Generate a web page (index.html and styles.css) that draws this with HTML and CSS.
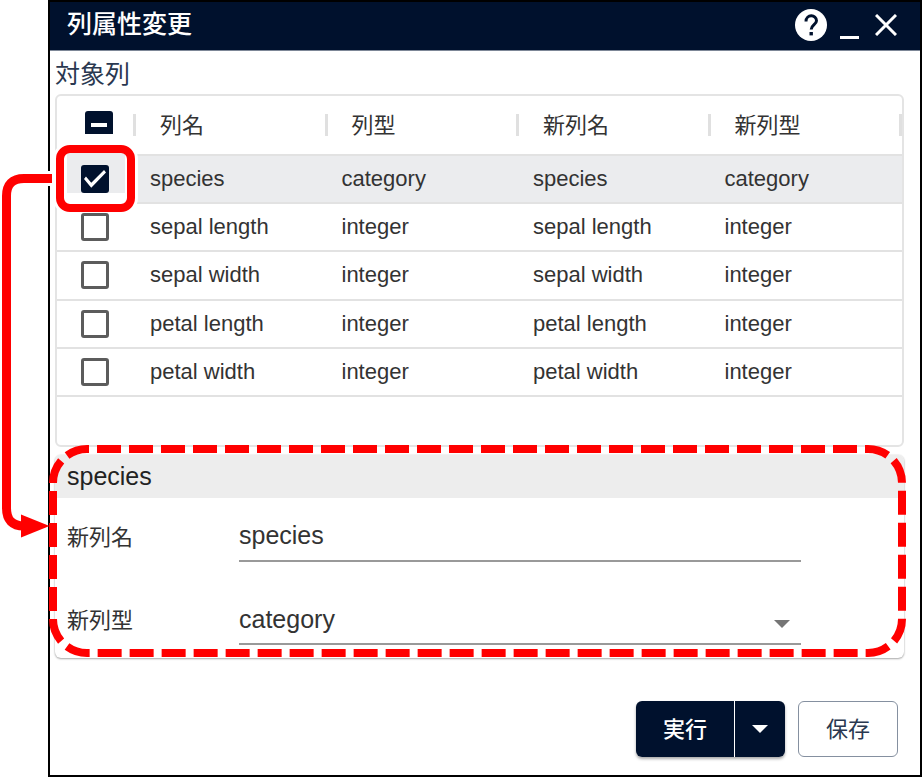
FILE: index.html
```
<!DOCTYPE html>
<html lang="ja">
<head>
    <meta charset="UTF-8">
    <meta name="viewport" content="width=device-width, initial-scale=1.0">
    <title>列属性変更</title>
    <link rel="stylesheet" href="styles.css">
</head>
<body>

    <main class="page">
        <section class="dialog">
            <!-- Title bar -->
            <header class="titlebar">
                <h1>列属性変更</h1>
                <button type="button" class="icon-button" aria-label="ヘルプ">
                    <svg width="32" height="32" viewBox="0 0 32 32">
                        <circle cx="16" cy="16" r="16" fill="#fff"/>
                        <path d="M11 12.500C11 5 21.500 5.200 21.500 11.800C21.500 15.500 16.200 16 16.200 20.500" fill="none" stroke="#00112d" stroke-width="3"/>
                        <rect x="14.500" y="23" width="3.400" height="3.400" fill="#00112d"/>
                    </svg>
                </button>
                <button type="button" class="icon-button" aria-label="最小化">
                    <svg width="20" height="32" viewBox="0 0 20 32"><path d="M1 28.500H20" stroke="#fff" stroke-width="3"/></svg>
                </button>
                <button type="button" class="icon-button close" aria-label="閉じる">
                    <svg width="22" height="22" viewBox="0 0 22 22"><path d="M1 1L21 21M21 1L1 21" stroke="#fff" stroke-width="3"/></svg>
                </button>
            </header>

            <div class="body">
                <h2>対象列</h2>

                <!-- Column list -->
                <div class="grid">
                    <table>
                        <thead>
                            <tr>
                                <th class="check"><div class="head"><input type="checkbox" class="mixed" aria-label="すべて選択"></div></th>
                                <th><div class="head"><span>列名</span></div></th>
                                <th><div class="head"><span>列型</span></div></th>
                                <th><div class="head"><span>新列名</span></div></th>
                                <th><div class="head"><span>新列型</span></div></th>
                            </tr>
                        </thead>
                        <tbody>
                            <tr class="selected">
                                <td class="check"><span class="callout"></span><input type="checkbox" checked aria-label="species"></td>
                                <td>species</td><td>category</td><td>species</td><td>category</td>
                            </tr>
                            <tr>
                                <td class="check"><input type="checkbox" aria-label="sepal length"></td>
                                <td>sepal length</td><td>integer</td><td>sepal length</td><td>integer</td>
                            </tr>
                            <tr>
                                <td class="check"><input type="checkbox" aria-label="sepal width"></td>
                                <td>sepal width</td><td>integer</td><td>sepal width</td><td>integer</td>
                            </tr>
                            <tr>
                                <td class="check"><input type="checkbox" aria-label="petal length"></td>
                                <td>petal length</td><td>integer</td><td>petal length</td><td>integer</td>
                            </tr>
                            <tr>
                                <td class="check"><input type="checkbox" aria-label="petal width"></td>
                                <td>petal width</td><td>integer</td><td>petal width</td><td>integer</td>
                            </tr>
                        </tbody>
                    </table>
                </div>

                <!-- Settings of the selected column -->
                <form class="panel">
                    <h3>species</h3>
                    <div class="field">
                        <label for="new-name">新列名</label>
                        <input type="text" id="new-name" value="species">
                    </div>
                    <div class="field">
                        <label for="new-type">新列型</label>
                        <div class="select">
                            <select id="new-type">
                                <option>category</option>
                                <option>integer</option>
                            </select>
                            <svg width="16" height="8" viewBox="0 0 16 8"><path d="M0 0H16L8 8Z" fill="#757575"/></svg>
                        </div>
                    </div>
                    <svg class="dashes"><rect width="100%" height="100%" rx="34"/></svg>
                </form>
            </div>

            <footer>
                <div class="split">
                    <button type="button" class="run">実行</button>
                    <button type="button" class="more" aria-label="その他">
                        <svg width="16" height="8" viewBox="0 0 16 8"><path d="M0 0H16L8 8Z" fill="#fff"/></svg>
                    </button>
                </div>
                <button type="button" class="save">保存</button>
            </footer>
        </section>

        <!-- Arrow from the checkbox to the panel -->
        <svg class="arrow" width="56" height="560" viewBox="0 0 56 560">
            <path d="M52 178.500H24Q6.500 178.500 6.500 196V508Q6.500 526 22 526" fill="none" stroke="#fff" stroke-width="15"/>
            <path d="M52 178.500H24Q6.500 178.500 6.500 196V508Q6.500 526 24 526" fill="none" stroke="#f00" stroke-width="9"/>
            <path d="M21 514.500L49.500 526L21 537.500Z" fill="#f00"/>
        </svg>
    </main>

</body>
</html>
```
FILE: styles.css
```
* {
    box-sizing: border-box;
}
body {
    margin: 0;
    background-color: #fff;
    color: #333;
    font-family: "Liberation Sans", "Noto Sans CJK JP", sans-serif;
    font-size: 22px;
}
h1, h2, h3 {
    margin: 0;
    font-size: 25px;
    font-weight: normal;
}
button, input, select {
    margin: 0;
    padding: 0;
    border: 0;
    background: none;
    color: inherit;
    font: inherit;
}
svg {
    display: block;
}
.page {
    position: relative;
    padding-left: 48px;
}
.dialog {
    display: flex;
    flex-direction: column;
    min-height: 100vh;
    border: 2px solid #000;
}

/* Title bar */
.titlebar {
    display: flex;
    align-items: center;
    height: 49px;
    padding: 0 23px 2px 17px;
    border-bottom: 1px solid #7d8797;
    background-color: #00112d;
    color: #fff;
}
.titlebar h1 {
    flex: 1;
    padding-bottom: 2px;
    font-weight: 500;
    line-height: 36px;
}
.icon-button {
    margin-right: 12px;
}
.icon-button + .icon-button {
    margin-right: 16px;
}
.icon-button.close {
    margin-right: 0;
}

.body {
    padding: 3px 16px 0 5px;
}
.body h2 {
    color: #2a3850;
    line-height: 40px;
}

/* Column list */
.grid {
    min-height: 353px;
    border: 2px solid #e4e4e4;
    border-radius: 6px;
}
table {
    width: 100%;
    height: 301px;
    border-collapse: collapse;
    table-layout: fixed;
}
th {
    height: 59px;
    padding: 0;
    font-weight: normal;
    text-align: left;
}
.head {
    display: flex;
    align-items: center;
    height: 22px;
    padding-left: 24px;
    border-right: 3px solid #e0e0e0;
}
.head span {
    padding-bottom: 4px;
}
td {
    padding: 0 14px;
    border-top: 2px solid #e2e2e2;
}
tr:last-child td {
    border-bottom: 2px solid #e2e2e2;
}
.check {
    width: 79px;
}
td.check {
    position: relative;
    padding: 0 24px;
}
th.check .head {
    align-items: flex-end;
    padding-left: 28px;
}
.selected {
    background-color: #ebecee;
}
input[type="checkbox"] {
    display: grid;
    place-items: center;
    position: relative;
    z-index: 2;
    width: 28px;
    height: 28px;
    border: 3px solid #5c5c5c;
    border-radius: 3px;
    appearance: none;
}
input[type="checkbox"]:checked,
input[type="checkbox"].mixed {
    border: 0;
    background-color: #00112d;
}
input[type="checkbox"]:checked::before {
    content: "";
    width: 22px;
    height: 18px;
    background-color: #fff;
    clip-path: polygon(0 50%, 9% 36%, 33% 70%, 91% 0, 100% 13%, 33% 98%);
}
input[type="checkbox"].mixed {
    height: 23px;
    margin-bottom: 2px;
    border-radius: 3px 3px 0 0;
}
input[type="checkbox"].mixed::before {
    content: "";
    width: 16px;
    height: 4px;
    margin-top: 5px;
    background-color: #fff;
}
.callout {
    position: absolute;
    top: -11px;
    left: -1px;
    z-index: 1;
    width: 79px;
    height: 67px;
    border: 8px solid #f00;
    border-radius: 14px;
    background: linear-gradient(#ebecee, #ebecee) 3px 0 / 58px 40px no-repeat #fff;
    box-shadow: 0 0 0 3px #fff;
}

/* Settings of the selected column */
.panel {
    position: relative;
    margin-top: 8px;
    padding-bottom: 13px;
    border-radius: 6px;
    box-shadow: 0 1px 2px #aaa, 0 0 2px #ddd;
}
.panel h3 {
    padding-left: 12px;
    border-radius: 6px 6px 0 0;
    background-color: #ededed;
    color: #222;
    line-height: 43px;
}
.field {
    display: grid;
    grid-template-columns: 172px 1fr;
    align-items: center;
    margin-top: 13px;
    padding: 0 103px 0 12px;
}
.field + .field {
    margin-top: 32px;
}
.field label {
    padding-bottom: 4px;
}
.field input,
.field select {
    width: 100%;
    height: 51px;
    border-bottom: 2px solid #999;
    font-size: 25px;
    appearance: none;
}
.select {
    position: relative;
}
.select svg {
    position: absolute;
    top: 26px;
    right: 11px;
    pointer-events: none;
}
.dashes {
    position: absolute;
    top: -6px;
    left: -2px;
    width: 100%;
    height: 204px;
    overflow: visible;
    pointer-events: none;
}
.dashes rect {
    fill: none;
    stroke: #f00;
    stroke-width: 8;
    stroke-dasharray: 24 8;
    stroke-dashoffset: 22;
}

/* Buttons */
footer {
    display: flex;
    justify-content: flex-end;
    gap: 13px;
    padding: 43px 22px 18px;
}
.split {
    display: flex;
    gap: 1px;
    border-radius: 6px;
    box-shadow: 0 2px 3px #aaa;
}
.run, .more {
    height: 56px;
    background-color: #00112d;
    color: #fff;
    font-weight: 500;
}
.run {
    width: 98px;
    padding-bottom: 4px;
    border-radius: 6px 0 0 6px;
}
.more {
    display: grid;
    place-items: center;
    width: 50px;
    border-radius: 0 6px 6px 0;
}
.save {
    width: 100px;
    height: 56px;
    padding-bottom: 4px;
    border: 1px solid #8590a0;
    border-radius: 6px;
    color: #2a3850;
}
.arrow {
    position: absolute;
    top: 0;
    left: 0;
}
```
